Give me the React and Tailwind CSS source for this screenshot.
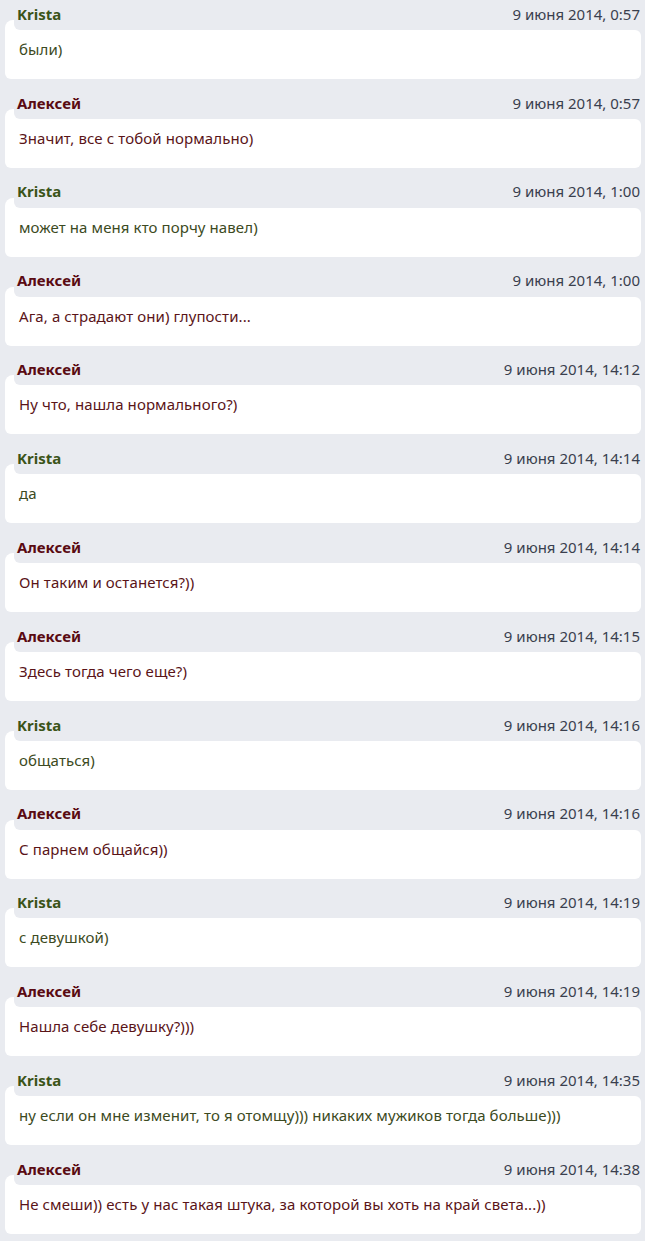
import React from "react";

const messages = [
  { who: "k", date: "9 июня 2014, 0:57", text: "были)" },
  { who: "a", date: "9 июня 2014, 0:57", text: "Значит, все с тобой нормально)" },
  { who: "k", date: "9 июня 2014, 1:00", text: "может на меня кто порчу навел)" },
  { who: "a", date: "9 июня 2014, 1:00", text: "Ага, а страдают они) глупости..." },
  { who: "a", date: "9 июня 2014, 14:12", text: "Ну что, нашла нормального?)" },
  { who: "k", date: "9 июня 2014, 14:14", text: "да" },
  { who: "a", date: "9 июня 2014, 14:14", text: "Он таким и останется?))" },
  { who: "a", date: "9 июня 2014, 14:15", text: "Здесь тогда чего еще?)" },
  { who: "k", date: "9 июня 2014, 14:16", text: "общаться)" },
  { who: "a", date: "9 июня 2014, 14:16", text: "С парнем общайся))" },
  { who: "k", date: "9 июня 2014, 14:19", text: "с девушкой)" },
  { who: "a", date: "9 июня 2014, 14:19", text: "Нашла себе девушку?)))" },
  { who: "k", date: "9 июня 2014, 14:35", text: "ну если он мне изменит, то я отомщу))) никаких мужиков тогда больше)))" },
  { who: "a", date: "9 июня 2014, 14:38", text: "Не смеши)) есть у нас такая штука, за которой вы хоть на край света...))" },
];

function Message({ m }) {
  const isK = m.who === "k";
  return (
    <div className="h-[88.85px] flex flex-col">
      <div className="relative z-10 ml-[9px] h-[28px] flex items-center justify-between bg-[#e9ebf0] rounded-bl-[6px] pl-[3px] pr-[1px] pb-[4px]">
        <span className={"font-bold text-[15px] " + (isK ? "text-[#3b5418]" : "text-[#5a0a12]")}>
          {isK ? "Krista" : "Алексей"}
        </span>
        <span className="text-[15px] text-[#3a3f4e]">{m.date}</span>
      </div>
      <div className="relative h-[49px] bg-white rounded-[6px] pl-[14px] pt-[8px]">
        <div className="absolute left-0 -top-[10px] w-[20px] h-[20px] bg-white rounded-tl-[8px]" />
        <div className={"relative text-[15px] leading-[22px] tracking-[0.1px] " + (isK ? "text-[#3c4a22]" : "text-[#5a1418]")}>
          {m.text}
        </div>
      </div>
    </div>
  );
}

export default function App() {
  return (
    <div className="min-h-[1241px] bg-[#e9ebf0] px-[4px] pr-[4px] pt-[2px]" style={{ fontFamily: '"Noto Sans", "Open Sans", sans-serif' }}>
      <div className="ml-[1px]">
        {messages.map((m, i) => (
          <Message key={i} m={m} />
        ))}
      </div>
    </div>
  );
}
